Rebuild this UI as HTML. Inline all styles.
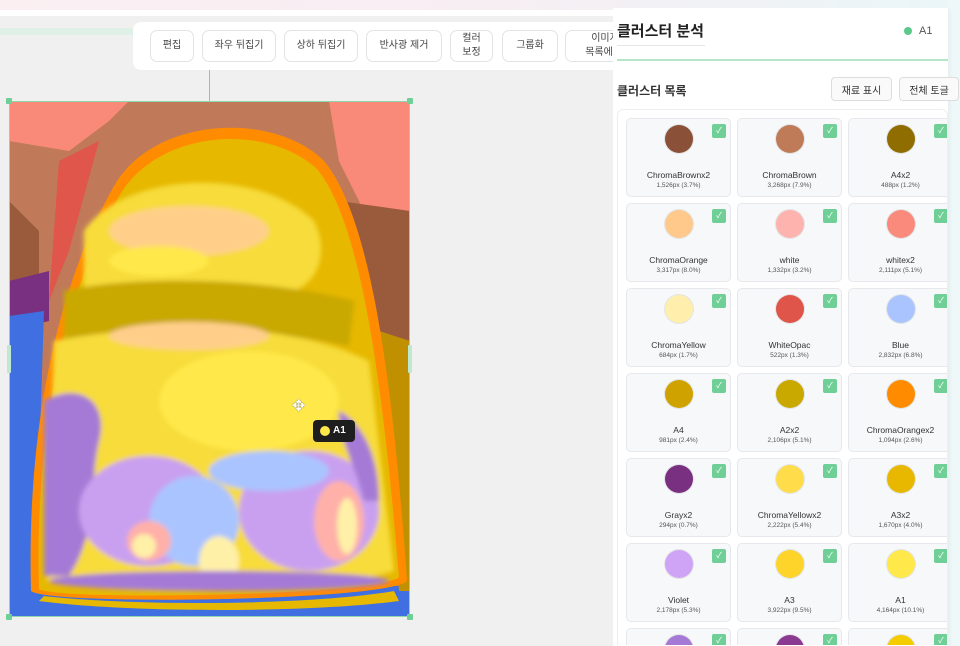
<!DOCTYPE html>
<html><head><meta charset="utf-8">
<style>
*{box-sizing:border-box;margin:0;padding:0}
html,body{width:960px;height:646px;overflow:hidden}
body{background:#f0f0f0;font-family:"Liberation Sans","Noto Sans CJK KR",sans-serif;position:relative;color:#222}
.top{position:absolute;left:0;top:0;width:960px;height:10px;background:linear-gradient(90deg,#fbeff2,#f7eef3 50%,#eaf6f8)}
.top2{position:absolute;left:0;top:10px;width:960px;height:6px;background:#fff}
.gl{position:absolute;left:0;top:28px;width:135px;height:7px;background:#dff0e6}
.tb{position:absolute;left:133px;top:22px;width:490px;height:48px;background:#fff;border-radius:8px}
.btn{position:absolute;top:8px;height:32px;border:1px solid #e3e3e3;border-radius:7px;background:#fff;font-size:10px;color:#444;display:flex;align-items:center;justify-content:center;text-align:center;line-height:14px}
.vline{position:absolute;left:209px;top:70px;width:1px;height:31px;background:#7fd0a0}
.img{position:absolute;left:9px;top:101px;width:401px;height:516px;overflow:hidden}
.sel{position:absolute;left:9px;top:101px;width:401px;height:516px;border:1px solid #8fd6ac}
.h{position:absolute;width:6px;height:6px;background:#6fcf97;border-radius:1px}
.panel{position:absolute;left:613px;top:8px;width:347px;height:638px;overflow:hidden}
.pbg{position:absolute;left:0;top:0;width:335px;height:638px;background:#fff;box-shadow:0 0 6px rgba(0,0,0,.08)}
.right{position:absolute;left:948px;top:0;width:12px;height:646px;background:#eef8f9}
.title{position:absolute;left:4px;top:12px;font-size:15px;font-weight:bold;color:#222}
.ul{position:absolute;left:4px;top:37px;width:88px;height:1px;background:#e6e6e6}
.gline{position:absolute;left:4px;top:51px;width:331px;height:2px;background:#b6e6c8}
.dot{position:absolute;left:291px;top:19px;width:8px;height:8px;border-radius:50%;background:#5cc98a}
.a1{position:absolute;left:306px;top:17px;font-size:11px;color:#555}
.sub{position:absolute;left:4px;top:74px;font-size:12px;font-weight:bold;color:#333}
.pb{position:absolute;top:69px;height:24px;border:1px solid #ddd;border-radius:4px;background:#fafafa;font-size:10px;color:#333;display:flex;align-items:center;justify-content:center}
.grid{position:absolute;left:4px;top:101px;width:331px;height:536px;border:1px solid #eee;border-bottom:none;border-radius:6px 6px 0 0;overflow:hidden}
.card{position:absolute;width:105px;height:79px;background:#f7f8fa;border:1px solid #e6e8eb;border-radius:5px;overflow:hidden}
.card.l{height:18px;border-bottom:none;border-radius:5px 5px 0 0}
.c{position:absolute;left:38px;top:6px;width:28px;height:28px;border-radius:50%;box-shadow:0 0 0 1px rgba(0,0,0,.08)}
.ck{position:absolute;left:85px;top:5px;width:14px;height:14px;background:#6fcf97;border-radius:2px;color:#fff;font-size:8px;line-height:14px;text-align:center}
.n{position:absolute;left:0;width:100%;top:51px;text-align:center;font-size:8.5px;color:#333}
.s{position:absolute;left:0;width:100%;top:63px;text-align:center;font-size:6.5px;color:#555}
</style></head><body>
<div class="top"></div><div class="top2"></div><div class="gl"></div>
<div class="tb">
<div class="btn" style="left:17px;width:44px">편집</div>
<div class="btn" style="left:69px;width:74px">좌우 뒤집기</div>
<div class="btn" style="left:151px;width:74px">상하 뒤집기</div>
<div class="btn" style="left:233px;width:76px">반사광 제거</div>
<div class="btn" style="left:317px;width:43px">컬러<br>보정</div>
<div class="btn" style="left:369px;width:56px">그룹화</div>
<div class="btn" style="left:432px;width:80px">이미지<br>목록에 저</div>
</div>
<div class="vline"></div>
<div class="img">
<svg width="401" height="516" viewBox="0 0 401 516" style="display:block">
<defs><filter id="b"><feGaussianBlur stdDeviation="2.5"/></filter></defs>
<rect width="401" height="516" fill="#c07a5a"/>
<path d="M0 0H120L100 20 60 50 0 40Z" fill="#f98a7a"/>
<path d="M320 0H401V140L360 120 330 60Z" fill="#f98a7a"/>
<path d="M0 100 30 130 30 180 0 200Z" fill="#9a5a3c"/>
<path d="M50 60 90 40 60 150 40 200Z" fill="#e0564a"/>
<path d="M0 180 40 170 40 220 0 230Z" fill="#7a3080"/>
<path d="M0 215 35 210 25 516H0Z" fill="#3f6fe0"/>
<path d="M330 100 401 110 401 240 370 230Z" fill="#9a5a3c"/>
<rect x="0" y="485" width="401" height="31" fill="#3f6fe0"/>
<path d="M370 230 401 240 401 490 390 490Z" fill="#c09000"/>
<path d="M22 490 C18 350 40 200 105 85 C145 15 265 10 315 60 C365 120 385 300 398 480 C380 500 40 505 22 490Z" fill="#ff8c00"/>
<path d="M30 488 C26 350 48 205 112 92 C152 28 258 22 308 68 C355 125 375 300 390 476 C370 495 45 500 30 488Z" fill="#e6b800"/>
<g filter="url(#b)">
<path d="M75 130 C115 70 250 65 305 120 C325 160 300 200 260 190 C200 200 130 210 75 190Z" fill="#f7dc3a"/>
<ellipse cx="180" cy="130" rx="80" ry="25" fill="#ffcf8a"/>
<ellipse cx="150" cy="160" rx="50" ry="15" fill="#ffe84a"/>
<path d="M55 190 C120 175 250 175 345 200 L340 245 C250 225 150 235 55 240Z" fill="#c9a800"/>
<path d="M45 240 C150 220 280 220 360 260 L385 470 C300 495 100 495 38 480Z" fill="#f7dc3a"/>
<ellipse cx="240" cy="300" rx="90" ry="50" fill="#ffe84a"/>
<ellipse cx="180" cy="235" rx="80" ry="14" fill="#ffcf8a"/>
<path d="M35 300 C70 280 100 300 90 340 C80 380 90 430 60 475 L35 475Z" fill="#a57ad6"/>
<ellipse cx="140" cy="410" rx="70" ry="55" fill="#c9a0f0"/>
<ellipse cx="300" cy="410" rx="70" ry="60" fill="#c9a0f0"/>
<ellipse cx="260" cy="370" rx="60" ry="20" fill="#aac4ff"/>
<ellipse cx="185" cy="420" rx="45" ry="45" fill="#aac4ff"/>
<ellipse cx="140" cy="440" rx="22" ry="20" fill="#ffb0a8"/>
<ellipse cx="135" cy="445" rx="12" ry="12" fill="#fff0a8"/>
<ellipse cx="330" cy="420" rx="25" ry="40" fill="#ffb0a8"/>
<ellipse cx="338" cy="425" rx="10" ry="28" fill="#fff0a8"/>
<ellipse cx="210" cy="460" rx="20" ry="25" fill="#fff0a8"/>
<path d="M330 310 C350 320 370 350 370 400 L355 400 C345 360 330 340 330 310Z" fill="#a57ad6"/>
<ellipse cx="210" cy="480" rx="170" ry="10" fill="#a57ad6"/>
</g>
<path d="M35 495 C120 505 300 505 385 490 L390 500 C300 512 120 512 30 500Z" fill="#e6b800"/>
</svg>
<div style="position:absolute;left:283px;top:297px;font-size:16px;line-height:18px;color:#fff;text-shadow:0 0 1px #333">✥</div>
<div style="position:absolute;left:304px;top:319px;width:42px;height:22px;background:#1e1e1e;border-radius:4px;color:#fff;font-size:10px;font-weight:bold;line-height:22px;padding-left:20px">A1<span style="position:absolute;left:7px;top:6px;width:10px;height:10px;border-radius:50%;background:#ffe84a"></span></div>
</div>
<div class="sel"></div>
<div class="h" style="left:6px;top:98px"></div><div class="h" style="left:407px;top:98px"></div>
<div class="h" style="left:6px;top:614px"></div><div class="h" style="left:407px;top:614px"></div>
<div class="h" style="left:7px;top:345px;width:4px;height:28px;background:#bfe8d0"></div>
<div class="h" style="left:408px;top:345px;width:4px;height:28px;background:#bfe8d0"></div>
<div class="right"></div>
<div class="panel">
<div class="pbg"></div>
<div class="title">클러스터 분석</div><div class="ul"></div>
<div class="dot"></div><div class="a1">A1</div>
<div class="gline"></div>
<div class="sub">클러스터 목록</div>
<div class="pb" style="left:218px;width:61px">재료 표시</div>
<div class="pb" style="left:286px;width:60px">전체 토글</div>
<div class="grid">
<div class="card" style="left:8px;top:8px"><div class="c" style="background:#8b5038"></div><div class="ck">✓</div><div class="n">ChromaBrownx2</div><div class="s">1,526px (3.7%)</div></div>
<div class="card" style="left:119px;top:8px"><div class="c" style="background:#bf7a58"></div><div class="ck">✓</div><div class="n">ChromaBrown</div><div class="s">3,268px (7.9%)</div></div>
<div class="card" style="left:230px;top:8px"><div class="c" style="background:#8f6d00"></div><div class="ck">✓</div><div class="n">A4x2</div><div class="s">488px (1.2%)</div></div>
<div class="card" style="left:8px;top:93px"><div class="c" style="background:#ffc98c"></div><div class="ck">✓</div><div class="n">ChromaOrange</div><div class="s">3,317px (8.0%)</div></div>
<div class="card" style="left:119px;top:93px"><div class="c" style="background:#ffb3ae"></div><div class="ck">✓</div><div class="n">white</div><div class="s">1,332px (3.2%)</div></div>
<div class="card" style="left:230px;top:93px"><div class="c" style="background:#fa8a7c"></div><div class="ck">✓</div><div class="n">whitex2</div><div class="s">2,111px (5.1%)</div></div>
<div class="card" style="left:8px;top:178px"><div class="c" style="background:#ffeeac"></div><div class="ck">✓</div><div class="n">ChromaYellow</div><div class="s">684px (1.7%)</div></div>
<div class="card" style="left:119px;top:178px"><div class="c" style="background:#e0554a"></div><div class="ck">✓</div><div class="n">WhiteOpac</div><div class="s">522px (1.3%)</div></div>
<div class="card" style="left:230px;top:178px"><div class="c" style="background:#aac4ff"></div><div class="ck">✓</div><div class="n">Blue</div><div class="s">2,832px (6.8%)</div></div>
<div class="card" style="left:8px;top:263px"><div class="c" style="background:#cfa200"></div><div class="ck">✓</div><div class="n">A4</div><div class="s">981px (2.4%)</div></div>
<div class="card" style="left:119px;top:263px"><div class="c" style="background:#c9a800"></div><div class="ck">✓</div><div class="n">A2x2</div><div class="s">2,106px (5.1%)</div></div>
<div class="card" style="left:230px;top:263px"><div class="c" style="background:#ff8c00"></div><div class="ck">✓</div><div class="n">ChromaOrangex2</div><div class="s">1,094px (2.6%)</div></div>
<div class="card" style="left:8px;top:348px"><div class="c" style="background:#7a3080"></div><div class="ck">✓</div><div class="n">Grayx2</div><div class="s">294px (0.7%)</div></div>
<div class="card" style="left:119px;top:348px"><div class="c" style="background:#ffdd4a"></div><div class="ck">✓</div><div class="n">ChromaYellowx2</div><div class="s">2,222px (5.4%)</div></div>
<div class="card" style="left:230px;top:348px"><div class="c" style="background:#e8b800"></div><div class="ck">✓</div><div class="n">A3x2</div><div class="s">1,670px (4.0%)</div></div>
<div class="card" style="left:8px;top:433px"><div class="c" style="background:#cfa3f5"></div><div class="ck">✓</div><div class="n">Violet</div><div class="s">2,178px (5.3%)</div></div>
<div class="card" style="left:119px;top:433px"><div class="c" style="background:#ffd42a"></div><div class="ck">✓</div><div class="n">A3</div><div class="s">3,922px (9.5%)</div></div>
<div class="card" style="left:230px;top:433px"><div class="c" style="background:#ffe84a"></div><div class="ck">✓</div><div class="n">A1</div><div class="s">4,164px (10.1%)</div></div>
<div class="card l" style="left:8px;top:518px"><div class="c" style="background:#a57ad6"></div><div class="ck">✓</div></div>
<div class="card l" style="left:119px;top:518px"><div class="c" style="background:#8a3a90"></div><div class="ck">✓</div></div>
<div class="card l" style="left:230px;top:518px"><div class="c" style="background:#f5cc00"></div><div class="ck">✓</div></div>
</div>
</div>
</body></html>
